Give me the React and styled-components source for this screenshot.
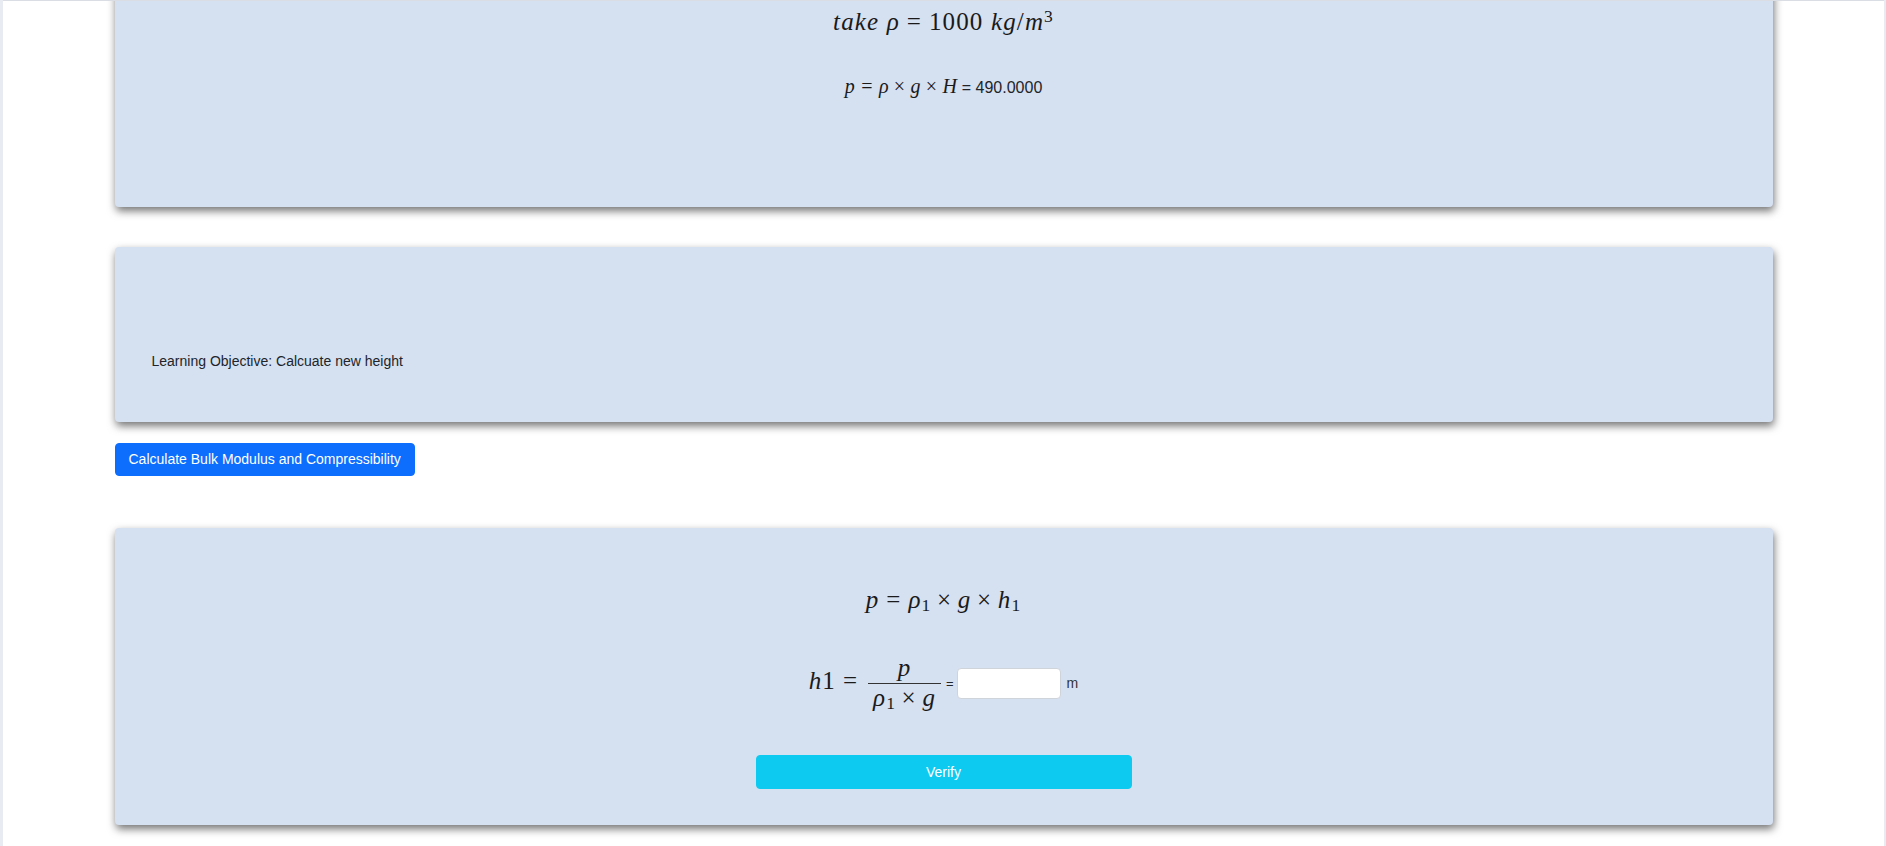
import React from 'react';
import styled, { createGlobalStyle } from 'styled-components';

const GlobalStyle = createGlobalStyle`
  html, body {
    margin: 0;
    padding: 0;
    background: #e8ecf2;
  }
  body {
    font-family: "Liberation Sans", Arial, sans-serif;
    color: #212529;
  }
  * { box-sizing: border-box; }
`;

// math bits, drawn as text
const Formula = styled.span`
  font-family: "Liberation Serif", "DejaVu Serif", serif;
  font-size: ${p => p.$size || 24}px;
  letter-spacing: 0.045em;
  line-height: 1.2;
  white-space: nowrap;
  color: #1a1a1a;
`;
const Mi = styled.i`
  font-style: italic;
`;
const Op = styled.span`
  margin: 0 ${p => (p.$rel ? '0.2778em' : '0.2222em')};
`;
const Gap = styled.span`
  display: inline-block;
  width: ${p => p.$w || 0.3}em;
`;
const Sub = styled.span`
  font-size: 0.7em;
  vertical-align: -0.15em;
  line-height: 0;
`;
const Sup = styled.span`
  font-size: 0.7em;
  vertical-align: 0.45em;
  line-height: 0;
`;
const Frac = styled.span`
  display: inline-flex;
  flex-direction: column;
  vertical-align: middle;
  margin: 0 0.12em;
`;
const Num = styled.span`
  text-align: center;
  line-height: 1.15;
  padding: 0 0.2em;
`;
const Den = styled.span`
  text-align: center;
  line-height: 1.15;
  padding: 0 0.2em;
  border-top: 1px solid #333;
`;

const Page = styled.div`
  margin: 0 2px 0 3px;
  min-height: 100vh;
  background: #fff;
  border-top: 1px solid #dadde3;
  overflow: hidden;
`;
const Container = styled.div`
  max-width: 1658px;
  margin: 0 auto;
  padding-bottom: 40px;
`;
const Card = styled.div`
  background: #d5e0f1;
  border-radius: 4px;
  box-shadow: 1px 4px 8px rgba(0, 0, 0, 0.55);
`;
const FormulaCard = styled(Card)`
  margin-top: -60px;
  padding: 66px 0 107px;
  display: flex;
  flex-direction: column;
  align-items: center;
  gap: 37px;
`;
const Line = styled.div`
  display: flex;
  align-items: baseline;
  justify-content: center;
  font-size: 16px;
  line-height: 24px;
`;
const Value = styled.span`
  margin-left: 4px;
`;
const ObjectiveCard = styled(Card)`
  margin-top: 40px;
  padding: 104px 37px 50px;
  font-size: 14px;
  line-height: 21px;
`;
const ActionRow = styled.div`
  margin-top: 21px;
  display: flex;
`;
const PrimaryButton = styled.button`
  font-family: inherit;
  font-size: 14px;
  line-height: 21px;
  padding: 5px 13px;
  color: #fff;
  background: #0d6efd;
  border: 1px solid #0d6efd;
  border-radius: 4px;
  cursor: pointer;
`;
const SolveCard = styled(Card)`
  margin-top: 52px;
  padding: 57px 0 36px;
  display: flex;
  flex-direction: column;
  align-items: center;
`;
const Row = styled.div`
  display: flex;
  align-items: center;
  justify-content: center;
  margin-top: ${p => p.$top || 0}px;
`;
const SmallEq = styled.span`
  font-size: 13px;
  margin: 0 3px 0 2px;
`;
const Answer = styled.input`
  width: 104px;
  height: 31px;
  border: 1px solid #ced4da;
  border-radius: 4px;
  background: #fff;
  padding: 4px 8px;
  font-size: 14px;
  outline: none;
`;
const Unit = styled.span`
  font-size: 14px;
  margin-left: 6px;
  color: #333;
`;
const VerifyButton = styled.button`
  margin-top: 42px;
  width: 376px;
  height: 34px;
  font-family: inherit;
  font-size: 14px;
  color: #fff;
  background: #0dcaf0;
  border: 1px solid #0dcaf0;
  border-radius: 4px;
  cursor: pointer;
`;

export default function App() {
  return (
    <>
      <GlobalStyle />
      <Page>
        <Container>
          <FormulaCard>
            <Line>
              <Formula $size={25}>
                <Mi>take</Mi>
                <Gap $w={0.3} />
                <Mi>ρ</Mi>
                <Op $rel>=</Op>
                1000
                <Gap $w={0.3} />
                <Mi>kg</Mi>/<Mi>m</Mi>
                <Sup>3</Sup>
              </Formula>
            </Line>
            <Line>
              <Formula $size={20}>
                <Mi>p</Mi>
                <Op $rel>=</Op>
                <Mi>ρ</Mi>
                <Op>×</Op>
                <Mi>g</Mi>
                <Op>×</Op>
                <Mi>H</Mi>
              </Formula>
              <Value>= 490.0000</Value>
            </Line>
          </FormulaCard>

          <ObjectiveCard>Learning Objective: Calcuate new height</ObjectiveCard>

          <ActionRow>
            <PrimaryButton>Calculate Bulk Modulus and Compressibility</PrimaryButton>
          </ActionRow>

          <SolveCard>
            <Row>
              <Formula $size={25}>
                <Mi>p</Mi>
                <Op $rel>=</Op>
                <Mi>ρ</Mi>
                <Sub>1</Sub>
                <Op>×</Op>
                <Mi>g</Mi>
                <Op>×</Op>
                <Mi>h</Mi>
                <Sub>1</Sub>
              </Formula>
            </Row>
            <Row $top={39}>
              <Formula $size={25}>
                <Mi>h</Mi>1
                <Op $rel>=</Op>
                <Frac>
                  <Num>
                    <Mi>p</Mi>
                  </Num>
                  <Den>
                    <Mi>ρ</Mi>
                    <Sub>1</Sub>
                    <Op>×</Op>
                    <Mi>g</Mi>
                  </Den>
                </Frac>
              </Formula>
              <SmallEq>=</SmallEq>
              <Answer type="text" />
              <Unit>m</Unit>
            </Row>
            <VerifyButton>Verify</VerifyButton>
          </SolveCard>
        </Container>
      </Page>
    </>
  );
}
